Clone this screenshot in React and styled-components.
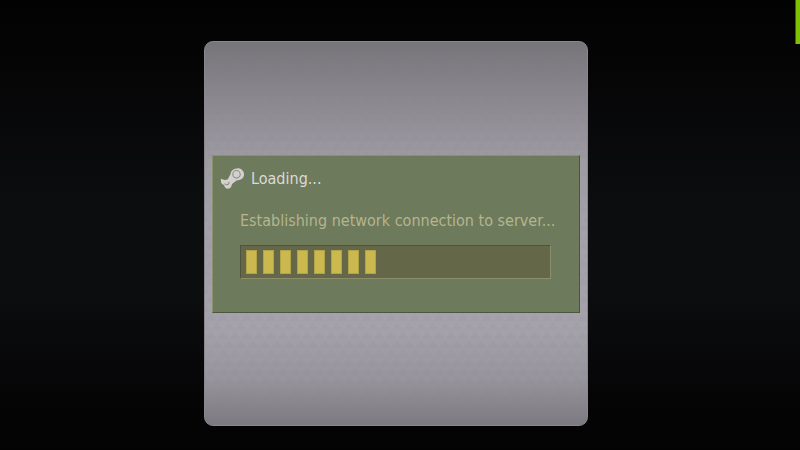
import React from "react"
import styled, { createGlobalStyle } from "styled-components"

const GlobalStyle = createGlobalStyle`
  * {
    box-sizing: border-box;
  }

  body {
    margin: 0;
    background: #040404;
    font-family: "DejaVu Sans Condensed", "DejaVu Sans", sans-serif;
  }
`

const Screen = styled.main`
  position: relative;
  display: flex;
  align-items: center;
  justify-content: center;
  min-height: 100vh;
  padding: 17px 8px 0 0;
  background: linear-gradient(#020202 0%, #050506 15%, #0c0d0f 45%, #0c0d0f 65%, #050506 88%, #030303 100%);
`

const Accent = styled.div`
  position: absolute;
  top: 0;
  right: 0;
  width: 5px;
  height: 44px;
  border-left: 1px solid #3f6100;
  background: #7fc000;
`

const Tile = styled.div`
  position: relative;
  display: flex;
  flex-direction: column;
  justify-content: center;
  width: 100%;
  max-width: 384px;
  aspect-ratio: 384 / 385;
  padding: 1px 7px 0;
  border: 1px solid #8a878e;
  border-radius: 9px;
  background: linear-gradient(#77747a 0%, #8d8990 16%, #a09ca4 32%, #a5a1aa 50%, #a5a2aa 75%, #97949b 88%, #7c7a80 100%);
  overflow: hidden;
`

const Texture = styled.svg`
  position: absolute;
  inset: 0;
  width: 100%;
  height: 100%;
`

const Dialog = styled.section`
  position: relative;
  display: flex;
  flex-direction: column;
  padding: 11px 28px 33px 27px;
  border: 1px solid;
  border-color: #8a926c #4b5540 #4b5540 #8a926c;
  background: #6d7a5b;
`

const Header = styled.header`
  display: flex;
  align-items: center;
  gap: 7px;
  margin-left: -20px;
`

const Title = styled.h1`
  margin: 0;
  color: #dcd9d8;
  font-size: 16px;
  font-weight: 400;
  line-height: 24px;
`

const Status = styled.label`
  margin-top: 18px;
  color: #b5b58f;
  font-size: 16px;
  line-height: 24px;
  white-space: nowrap;
`

const Progress = styled.div`
  display: flex;
  gap: 6px;
  height: 34px;
  margin-top: 12px;
  padding: 4px 5px;
  border: 1px solid;
  border-color: #4f543c #8c8d6c #8c8d6c #4f543c;
  background: #646849;
`

const Block = styled.span`
  width: 11px;
  height: 24px;
  border: 1px solid #b2a348;
  background: #cbb950;
`

const Logo = () => (
  <svg width="24" height="24" viewBox="0 0 24 24" aria-hidden="true">
    <path
      d="M16.5 1.500a6 6 0 0 0-6 5.800L7.600 12.500 4.500 13 1 11.800c-.4 2 .1 3.500.9 5.100l2.200 1.200c.3 4 5.400 5 7.200 1.400L12 17l5-3.800A6 6 0 1 0 16.500 1.500z"
      fill="#d3d0cf"
    />
    <circle cx="16.500" cy="7.200" r="3.700" fill="none" stroke="#8c9083" strokeWidth="1.100" />
    <path d="M4.500 16.800l2 .9a2 2 0 0 0 2.200-3" fill="none" stroke="#8c9083" strokeWidth="1.100" />
  </svg>
)

const TriangleTexture = () => (
  <Texture aria-hidden="true">
    <defs>
      <pattern id="triangles" width="12" height="18" patternUnits="userSpaceOnUse">
        <path d="M0 9l6-8 6 8zM-6 18l6-8 6 8zM6 18l6-8 6 8z" fill="#6f7890" fillOpacity="0.08" />
      </pattern>
    </defs>
    <rect width="100%" height="100%" fill="url(#triangles)" />
  </Texture>
)

const App = () => {
  const loaded = 8
  const total = 18

  return (
    <>
      <GlobalStyle />
      <Screen>
        <Tile>
          <TriangleTexture />
          <Dialog aria-labelledby="title">
            <Header>
              <Logo />
              <Title id="title">Loading...</Title>
            </Header>
            <Status id="status">Establishing network connection to server...</Status>
            <Progress
              role="progressbar"
              aria-labelledby="status"
              aria-valuemin={0}
              aria-valuemax={total}
              aria-valuenow={loaded}
            >
              {Array.from({ length: loaded }, (_, i) => (
                <Block key={i} />
              ))}
            </Progress>
          </Dialog>
        </Tile>
        <Accent />
      </Screen>
    </>
  )
}

export default App
